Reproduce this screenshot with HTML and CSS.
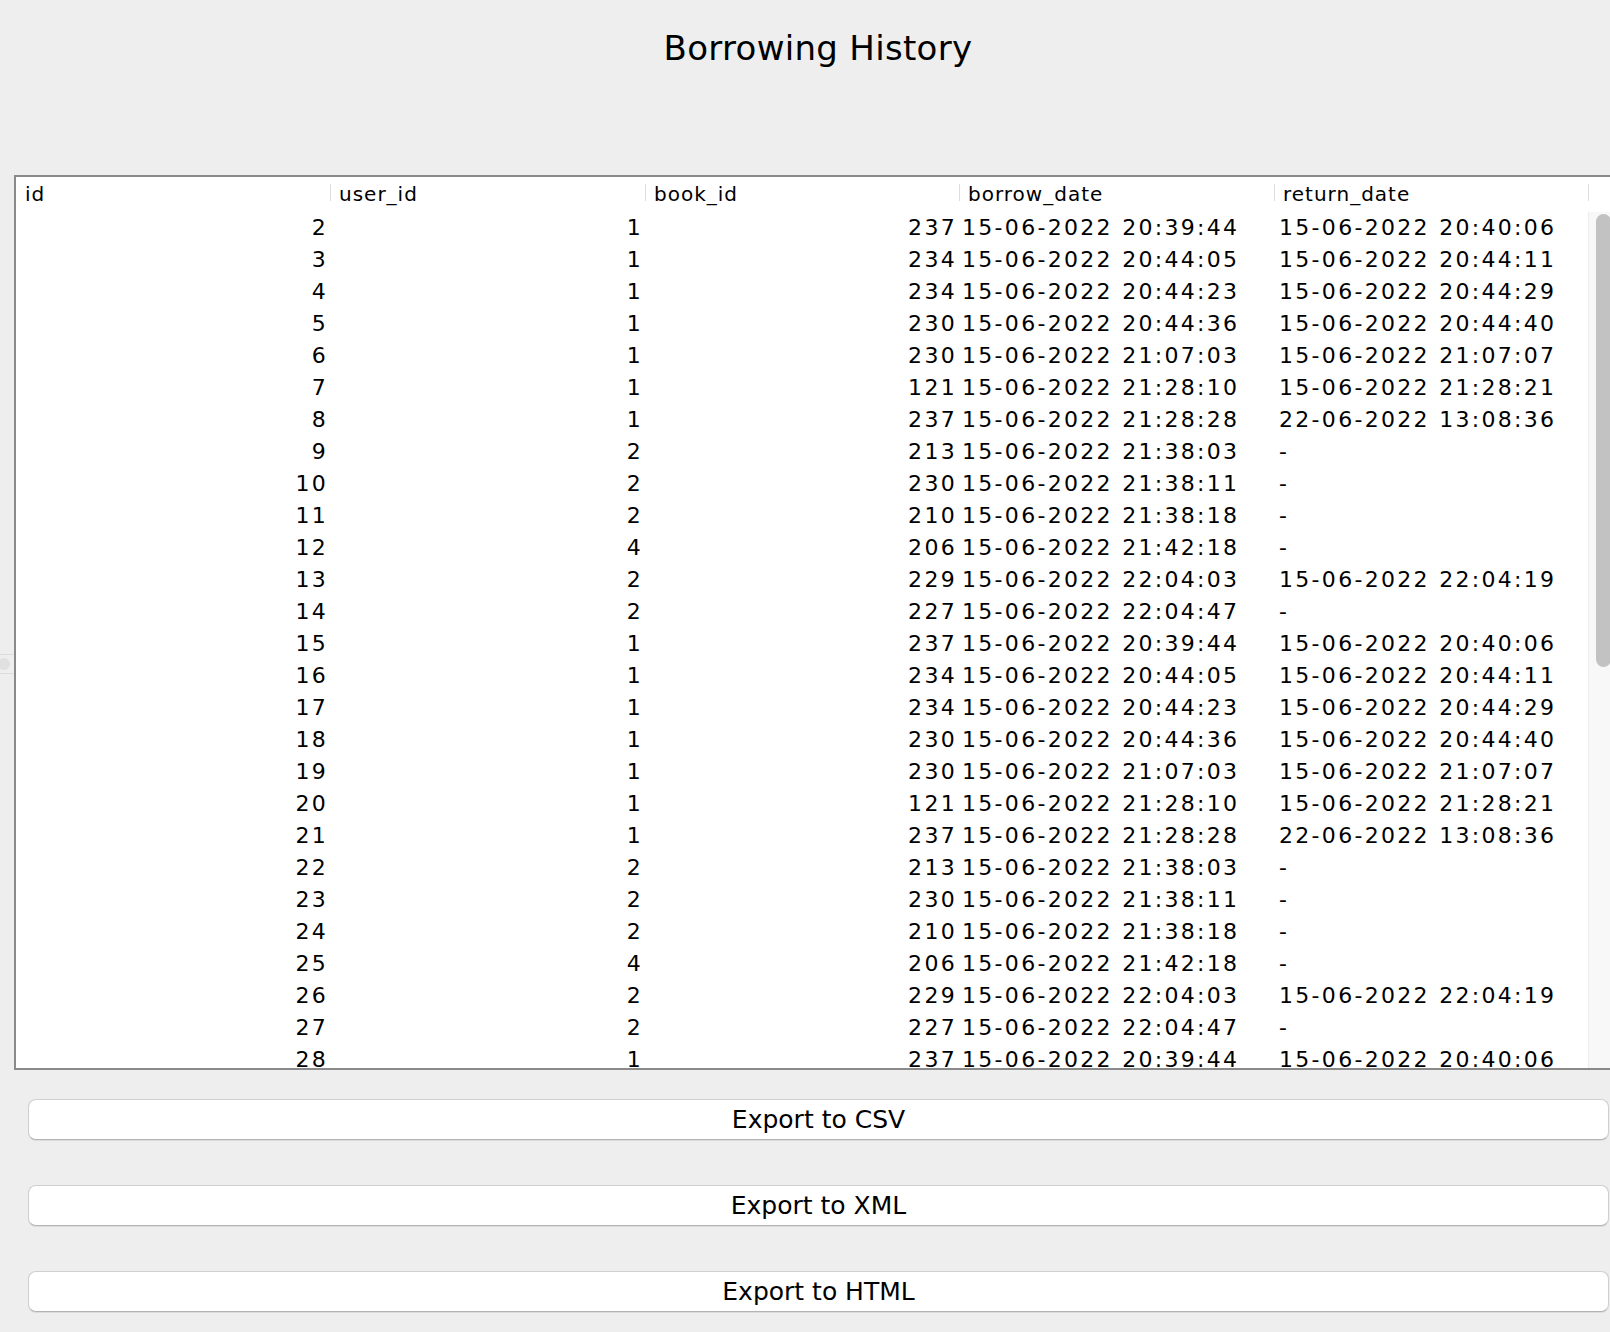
FILE: index.html
```html
<!DOCTYPE html>
<html>
<head>
<meta charset="utf-8">
<title>Borrowing History</title>
<link rel="stylesheet" href="styles.css">
</head>
<body>
<div class="divider-knob"></div>
<main class="window">
  <h1 class="title">Borrowing History</h1>
  <section class="table">
    <div class="thead">
      <div class="th">id</div>
      <div class="th">user_id</div>
      <div class="th">book_id</div>
      <div class="th">borrow_date</div>
      <div class="th">return_date</div>
      <div class="th"></div>
    </div>
    <div class="tbody">
      <div class="rows">
        <div class="tr"><div class="num">2</div><div class="num">1</div><div class="num">237</div><div class="txt">15-06-2022 20:39:44</div><div class="txt ret">15-06-2022 20:40:06</div></div>
        <div class="tr"><div class="num">3</div><div class="num">1</div><div class="num">234</div><div class="txt">15-06-2022 20:44:05</div><div class="txt ret">15-06-2022 20:44:11</div></div>
        <div class="tr"><div class="num">4</div><div class="num">1</div><div class="num">234</div><div class="txt">15-06-2022 20:44:23</div><div class="txt ret">15-06-2022 20:44:29</div></div>
        <div class="tr"><div class="num">5</div><div class="num">1</div><div class="num">230</div><div class="txt">15-06-2022 20:44:36</div><div class="txt ret">15-06-2022 20:44:40</div></div>
        <div class="tr"><div class="num">6</div><div class="num">1</div><div class="num">230</div><div class="txt">15-06-2022 21:07:03</div><div class="txt ret">15-06-2022 21:07:07</div></div>
        <div class="tr"><div class="num">7</div><div class="num">1</div><div class="num">121</div><div class="txt">15-06-2022 21:28:10</div><div class="txt ret">15-06-2022 21:28:21</div></div>
        <div class="tr"><div class="num">8</div><div class="num">1</div><div class="num">237</div><div class="txt">15-06-2022 21:28:28</div><div class="txt ret">22-06-2022 13:08:36</div></div>
        <div class="tr"><div class="num">9</div><div class="num">2</div><div class="num">213</div><div class="txt">15-06-2022 21:38:03</div><div class="txt ret">-</div></div>
        <div class="tr"><div class="num">10</div><div class="num">2</div><div class="num">230</div><div class="txt">15-06-2022 21:38:11</div><div class="txt ret">-</div></div>
        <div class="tr"><div class="num">11</div><div class="num">2</div><div class="num">210</div><div class="txt">15-06-2022 21:38:18</div><div class="txt ret">-</div></div>
        <div class="tr"><div class="num">12</div><div class="num">4</div><div class="num">206</div><div class="txt">15-06-2022 21:42:18</div><div class="txt ret">-</div></div>
        <div class="tr"><div class="num">13</div><div class="num">2</div><div class="num">229</div><div class="txt">15-06-2022 22:04:03</div><div class="txt ret">15-06-2022 22:04:19</div></div>
        <div class="tr"><div class="num">14</div><div class="num">2</div><div class="num">227</div><div class="txt">15-06-2022 22:04:47</div><div class="txt ret">-</div></div>
        <div class="tr"><div class="num">15</div><div class="num">1</div><div class="num">237</div><div class="txt">15-06-2022 20:39:44</div><div class="txt ret">15-06-2022 20:40:06</div></div>
        <div class="tr"><div class="num">16</div><div class="num">1</div><div class="num">234</div><div class="txt">15-06-2022 20:44:05</div><div class="txt ret">15-06-2022 20:44:11</div></div>
        <div class="tr"><div class="num">17</div><div class="num">1</div><div class="num">234</div><div class="txt">15-06-2022 20:44:23</div><div class="txt ret">15-06-2022 20:44:29</div></div>
        <div class="tr"><div class="num">18</div><div class="num">1</div><div class="num">230</div><div class="txt">15-06-2022 20:44:36</div><div class="txt ret">15-06-2022 20:44:40</div></div>
        <div class="tr"><div class="num">19</div><div class="num">1</div><div class="num">230</div><div class="txt">15-06-2022 21:07:03</div><div class="txt ret">15-06-2022 21:07:07</div></div>
        <div class="tr"><div class="num">20</div><div class="num">1</div><div class="num">121</div><div class="txt">15-06-2022 21:28:10</div><div class="txt ret">15-06-2022 21:28:21</div></div>
        <div class="tr"><div class="num">21</div><div class="num">1</div><div class="num">237</div><div class="txt">15-06-2022 21:28:28</div><div class="txt ret">22-06-2022 13:08:36</div></div>
        <div class="tr"><div class="num">22</div><div class="num">2</div><div class="num">213</div><div class="txt">15-06-2022 21:38:03</div><div class="txt ret">-</div></div>
        <div class="tr"><div class="num">23</div><div class="num">2</div><div class="num">230</div><div class="txt">15-06-2022 21:38:11</div><div class="txt ret">-</div></div>
        <div class="tr"><div class="num">24</div><div class="num">2</div><div class="num">210</div><div class="txt">15-06-2022 21:38:18</div><div class="txt ret">-</div></div>
        <div class="tr"><div class="num">25</div><div class="num">4</div><div class="num">206</div><div class="txt">15-06-2022 21:42:18</div><div class="txt ret">-</div></div>
        <div class="tr"><div class="num">26</div><div class="num">2</div><div class="num">229</div><div class="txt">15-06-2022 22:04:03</div><div class="txt ret">15-06-2022 22:04:19</div></div>
        <div class="tr"><div class="num">27</div><div class="num">2</div><div class="num">227</div><div class="txt">15-06-2022 22:04:47</div><div class="txt ret">-</div></div>
        <div class="tr"><div class="num">28</div><div class="num">1</div><div class="num">237</div><div class="txt">15-06-2022 20:39:44</div><div class="txt ret">15-06-2022 20:40:06</div></div>
      </div>
      <div class="scrollbar"><div class="thumb"></div></div>
    </div>
  </section>
  <div class="actions">
    <button class="btn">Export to CSV</button>
    <button class="btn">Export to XML</button>
    <button class="btn">Export to HTML</button>
  </div>
</main>
</body>
</html>
```

FILE: styles.css
```css
html, body {
  margin: 0;
  padding: 0;
  overflow: hidden;
  background: #eeeeee;
}

body {
  position: relative;
  width: 1610px;
  height: 1332px;
  font-family: "DejaVu Sans", "Liberation Sans", sans-serif;
  color: #000;
}

.divider-knob {
  position: absolute;
  left: 0;
  top: 654px;
  width: 14px;
  height: 18px;
  border-top: 1px solid #dcdcdc;
  border-bottom: 1px solid #dcdcdc;
}
.divider-knob::after {
  content: "";
  position: absolute;
  left: -2px;
  top: 3px;
  width: 12px;
  height: 12px;
  border-radius: 50%;
  background: #e0e0e0;
}

.window {
  width: 1608px;
  margin-left: 14px;
  display: flex;
  flex-direction: column;
}

.title {
  margin: 28px 0 0 0;
  height: 40px;
  line-height: 40px;
  font-size: 34px;
  letter-spacing: 0.3px;
  font-weight: normal;
  text-align: center;
}

.table {
  margin-top: 107px;
  box-sizing: border-box;
  width: 1608px;
  height: 895px;
  border: 2px solid #8a8a8a;
  background: #fff;
  display: flex;
  flex-direction: column;
}

.thead {
  display: grid;
  grid-template-columns: 314px 315px 314px 315px 314px 1fr;
  height: 35px;
  flex: none;
}

.th {
  position: relative;
  font-size: 20px;
  letter-spacing: 1px;
  line-height: 35px;
  padding-left: 9px;
  white-space: nowrap;
}
.th + .th::before {
  content: "";
  position: absolute;
  left: 0;
  top: 7px;
  height: 17px;
  width: 1px;
  background: #dddddd;
}

.tbody {
  flex: 1;
  display: flex;
  overflow: hidden;
}

.rows {
  width: 1572px;
  flex: none;
}

.tr {
  display: grid;
  grid-template-columns: 314px 315px 314px 315px 314px;
  height: 32px;
  font-size: 22px;
  letter-spacing: 2.3px;
  line-height: 32px;
  white-space: nowrap;
}

.num {
  text-align: right;
  padding-right: 2px;
}

.txt {
  text-align: left;
  padding-left: 3px;
}

.txt.ret {
  padding-left: 5px;
}

.scrollbar {
  flex: 1;
  box-sizing: border-box;
  border-left: 1px solid #ececec;
  background: #f8f8f8;
  padding: 2px 0 0 7px;
}

.thumb {
  width: 15px;
  height: 453px;
  border-radius: 8px;
  background: #c2c2c2;
}

.actions {
  margin: 29px 13px 0 14px;
  display: flex;
  flex-direction: column;
  gap: 45px;
}

.btn {
  height: 41px;
  box-sizing: border-box;
  border: 1px solid #cfcfcf;
  border-bottom-color: #b4b4b4;
  border-radius: 8px;
  background: #ffffff;
  box-shadow: 0 1px 0 rgba(0, 0, 0, 0.08);
  font-family: "DejaVu Sans", "Liberation Sans", sans-serif;
  font-size: 25px;
  color: #000;
  padding: 0;
  line-height: 39px;
  text-align: center;
}
```
